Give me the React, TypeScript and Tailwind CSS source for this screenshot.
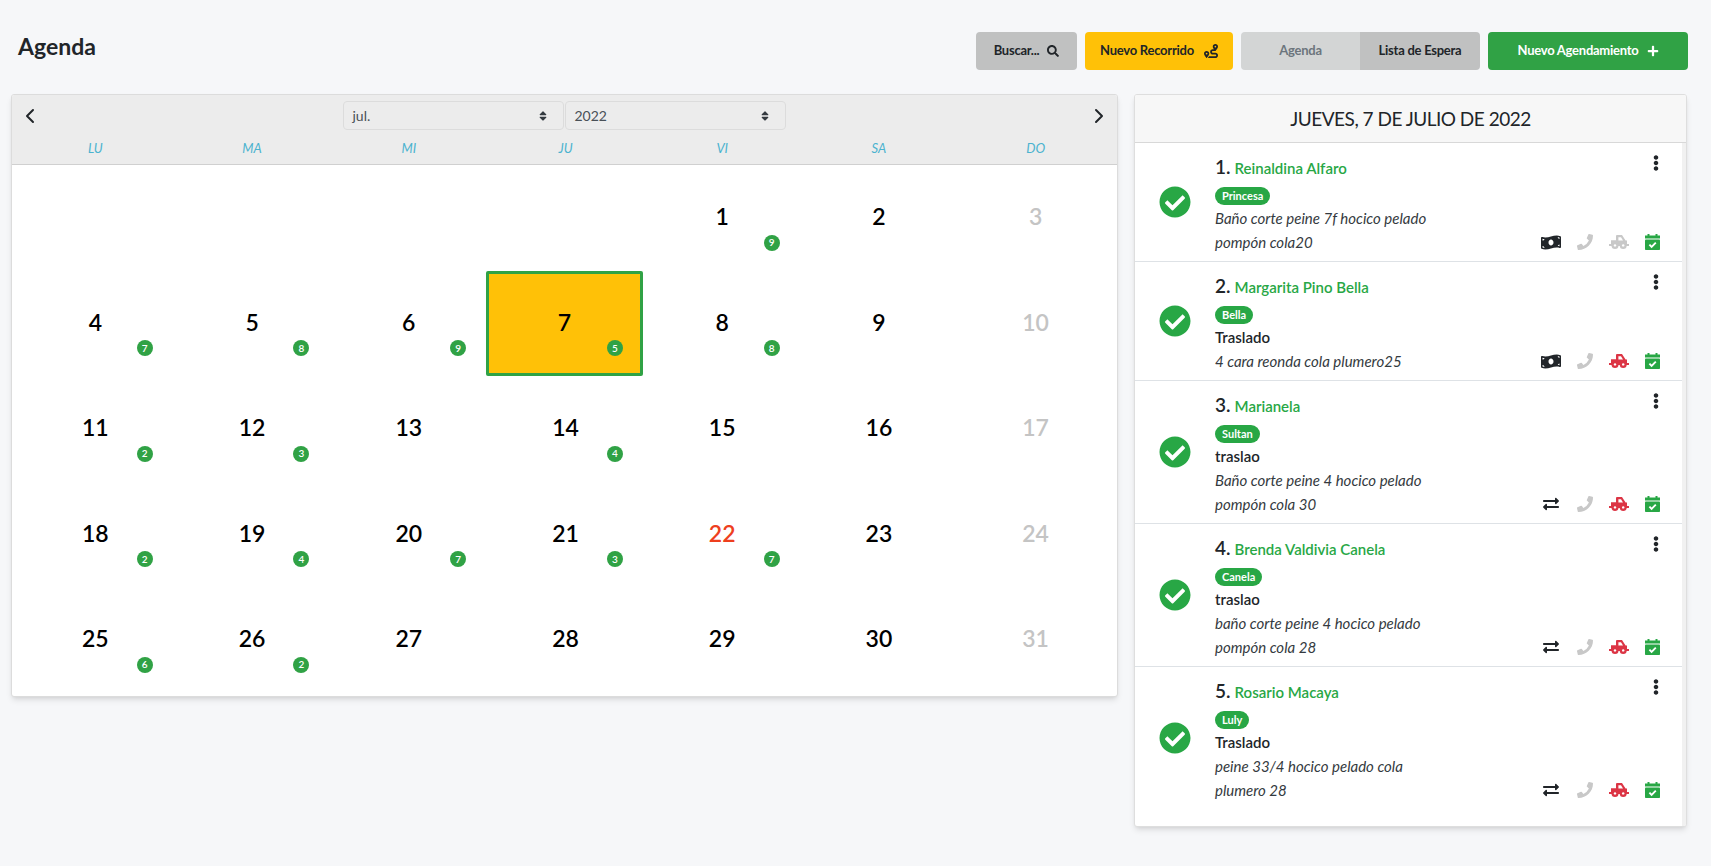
import { FaCheckCircle, FaEllipsisV, FaExchangeAlt, FaMoneyBillWave, FaPhoneAlt, FaPlus, FaRoute, FaSearch, FaSort } from 'react-icons/fa'
import { ChevronLeft, ChevronRight } from 'lucide-react'

const weekDays = ['LU', 'MA', 'MI', 'JU', 'VI', 'SA', 'DO']

const badges: Record<number, number> = {
  1: 9, 4: 7, 5: 8, 6: 9, 7: 5, 8: 8, 11: 2, 12: 3, 14: 4, 18: 2, 19: 4, 20: 7, 21: 3, 22: 7, 25: 6, 26: 2,
}

const appointments = [
  { name: 'Reinaldina Alfaro', pet: 'Princesa', note: '', lines: ['Baño corte peine 7f hocico pelado', 'pompón cola20'], pay: 'money', truck: false },
  { name: 'Margarita Pino Bella', pet: 'Bella', note: 'Traslado', lines: ['4 cara reonda cola plumero25'], pay: 'money', truck: true },
  { name: 'Marianela', pet: 'Sultan', note: 'traslao', lines: ['Baño corte peine 4 hocico pelado', 'pompón cola 30'], pay: 'transfer', truck: true },
  { name: 'Brenda Valdivia Canela', pet: 'Canela', note: 'traslao', lines: ['baño corte peine 4 hocico pelado', 'pompón cola 28'], pay: 'transfer', truck: true },
  { name: 'Rosario Macaya', pet: 'Luly', note: 'Traslado', lines: ['peine 33/4 hocico pelado cola', 'plumero 28'], pay: 'transfer', truck: true },
]

function CalendarDone() {
  return (
    <svg width="15" height="16" viewBox="0 0 15 16" className="text-[#28a745]">
      <rect x="2.5" y="0" width="2" height="3" fill="currentColor" />
      <rect x="10.5" y="0" width="2" height="3" fill="currentColor" />
      <rect x="0" y="1.5" width="15" height="3" fill="currentColor" />
      <rect x="0" y="5.5" width="15" height="10.5" rx="0.8" fill="currentColor" />
      <path d="M4.4 10.6 6.6 12.8 10.8 8.6" fill="none" stroke="white" strokeWidth="1.9" />
    </svg>
  )
}

function Pickup({ active }: { active: boolean }) {
  return (
    <svg width="20" height="14" viewBox="0 0 20 14" className={active ? 'text-[#dc3545]' : 'text-[#c8c8c8]'}>
      <path
        fillRule="evenodd"
        fill="currentColor"
        d="M2 5.2H7V1a1 1 0 0 1 1-1h5l3.6 5.6H18V9h2v2H0V9h2zM9.4 2.2v3.2h4.6L12 2.2z"
      />
      <circle cx="6" cy="10.4" r="3.5" fill="currentColor" />
      <circle cx="6" cy="10.4" r="1.2" fill="white" />
      <circle cx="14.2" cy="10.4" r="3.5" fill="currentColor" />
      <circle cx="14.2" cy="10.4" r="1.2" fill="white" />
    </svg>
  )
}

function DayCell({ day }: { day: number }) {
  const selected = day === 7
  const sunday = day % 7 === 3
  let color = 'text-black'
  if (sunday) color = 'text-[#c4c4c4]'
  if (day === 22) color = 'text-[#ee3f1e]'

  return (
    <div className={`relative flex items-center justify-center pb-[2px] ${selected ? '-ml-[1px] mr-[1px] rounded-[2px] border-[3px] border-[#30a245] bg-[#ffc107]' : ''}`}>
      <span className={`text-[23px] font-semibold leading-none ${color}`}>{day}</span>
      {badges[day] && (
        <span className={`absolute flex h-4 w-4 items-center justify-center rounded-full bg-[#30a245] text-[10px] font-semibold text-white ${selected ? 'right-[17px] bottom-[17px]' : 'right-[21px] bottom-[20px]'}`}>
          {badges[day]}
        </span>
      )}
    </div>
  )
}

function MonthSelect({ label }: { label: string }) {
  return (
    <div className="flex h-[29px] w-[221px] items-center justify-between rounded border border-[#dcdcdc] bg-[#ececec] pr-[14px] pl-[9px] text-[14px] text-[#495057]">
      {label}
      <FaSort size={12} className="text-[#343a40]" />
    </div>
  )
}

export default function App() {
  return (
    <div className="min-h-[866px] bg-[#f6f7f9] font-['Lato',sans-serif] text-[#212529]">
      <div className="flex items-start justify-between pt-8 pr-[23px] pl-[18px]">
        <h1 className="-mt-[3px] text-[23px] font-bold">Agenda</h1>
        <div className="flex gap-2 text-[13px] font-bold tracking-[-0.25px]">
          <button className="flex h-[38px] w-[101px] items-center justify-center gap-2 rounded bg-[#c0c1c1]">
            Buscar... <FaSearch size={12} />
          </button>
          <button className="flex h-[38px] w-[148px] items-center justify-center gap-[10px] rounded bg-[#ffc107]">
            Nuevo Recorrido <FaRoute size={14} />
          </button>
          <div className="flex">
            <button className="h-[38px] w-[119px] rounded-l bg-[#d3d5d5] text-[#6c757d]">Agenda</button>
            <button className="h-[38px] w-[120px] rounded-r bg-[#c0c1c1]">Lista de Espera</button>
          </div>
          <button className="flex h-[38px] w-[200px] items-center justify-center gap-2 rounded bg-[#30a245] text-white">
            Nuevo Agendamiento <FaPlus size={12} />
          </button>
        </div>
      </div>

      <div className="mt-6 flex items-start gap-4 pl-[11px]">
        <section className="w-[1107px] overflow-hidden rounded-[3px] border border-[#dcdcdc] bg-white pb-[3px] shadow-md">
          <div className="h-[70px] border-b border-[#d0d0d0] bg-[#ececec] pr-[3px] pl-[5px]">
            <div className="flex h-[41px] items-center justify-between pl-[5px]">
              <ChevronLeft size={24} strokeWidth={2} className="-ml-[4px] text-[#212529]" />
              <div className="mr-[1px] flex gap-[1px]">
                <MonthSelect label="jul." />
                <MonthSelect label="2022" />
              </div>
              <ChevronRight size={24} strokeWidth={2} className="mr-[3px] text-[#212529]" />
            </div>
            <div className="grid grid-cols-7">
              {weekDays.map((d) => (
                <span key={d} className="text-center text-[13px] leading-[24px] text-[#4bb3cf] italic">
                  {d}
                </span>
              ))}
            </div>
          </div>
          <div className="grid auto-rows-[105.5px] grid-cols-7 pr-[3px] pl-[5px]">
            <div className="col-span-4" />
            {Array.from({ length: 31 }, (_, i) => (
              <DayCell key={i} day={i + 1} />
            ))}
          </div>
        </section>

        <section className="w-[553px] overflow-hidden rounded-[3px] border border-[#dedede] bg-white shadow-md">
          <div className="flex h-[48px] items-center justify-center border-b border-[#d8d8d8] bg-[#f7f7f7] pt-[2px] text-[19px] tracking-[-0.5px]">
            JUEVES, 7 DE JULIO DE 2022
          </div>
          <div className="border-r-[4px] border-[#f1f1f1] pb-[17px]">
            {appointments.map((a, i) => (
              <div key={a.name} className={`flex items-center pt-[10px] pb-[7px] ${i < 4 ? 'border-b border-[#dee2e6]' : ''}`}>
                <div className="mb-[3px] flex w-[80px] shrink-0 justify-center pr-[1px]">
                  <FaCheckCircle size={32} className="text-[#28a745]" />
                </div>
                <div className="flex-1 pr-[22px]">
                  <div className="flex h-[28px] items-center justify-between">
                    <div className="flex items-baseline gap-[4px]">
                      <span className="text-[19px] font-semibold">{i + 1}.</span>
                      <span className="text-[15px] font-semibold text-[#28a745]">{a.name}</span>
                    </div>
                    <FaEllipsisV size={16} className="-mr-[4px] -translate-y-[4px]" />
                  </div>
                  <div className="mt-[6px] mb-[1px] flex h-[18px] w-fit items-center rounded-full bg-[#28a745] px-[7px] text-[11px] font-bold text-white">
                    {a.pet}
                  </div>
                  {a.note && <div className="text-[15px] leading-[24px] font-semibold">{a.note}</div>}
                  <div className="flex items-end justify-between">
                    <div className="text-[15px] leading-[24px] text-[#343a40] italic">
                      {a.lines.map((l) => (
                        <div key={l}>{l}</div>
                      ))}
                    </div>
                    <div className="flex h-[24px] items-center gap-4">
                      <span className="flex w-[20px] justify-center">
                        {a.pay === 'money' ? <FaMoneyBillWave size={21} /> : <FaExchangeAlt size={16} />}
                      </span>
                      <FaPhoneAlt size={16} className="scale-x-[-1] text-[#c8c8c8]" />
                      <Pickup active={a.truck} />
                      <CalendarDone />
                    </div>
                  </div>
                </div>
              </div>
            ))}
          </div>
        </section>
      </div>
    </div>
  )
}
